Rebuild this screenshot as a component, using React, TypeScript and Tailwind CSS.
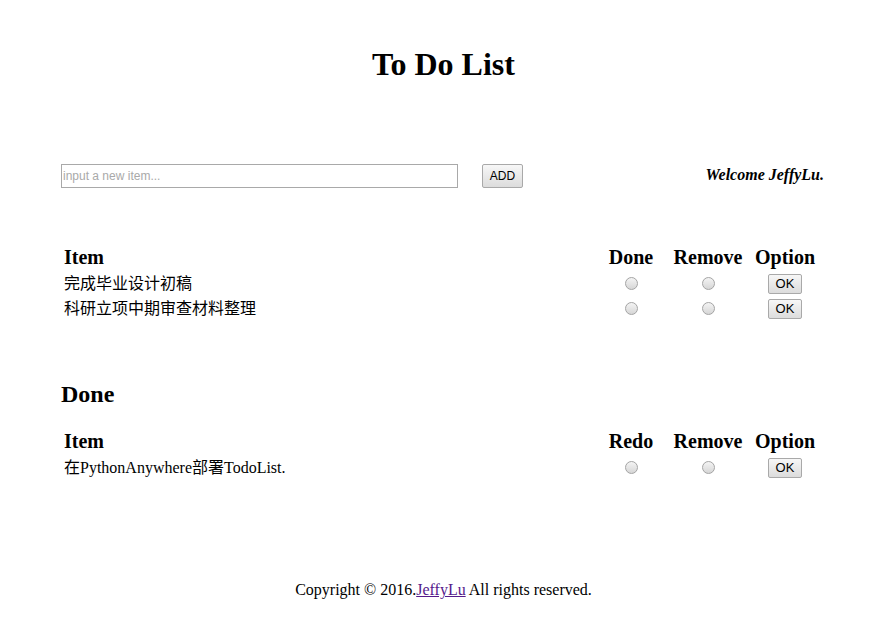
const serif = "font-['Liberation_Serif','Noto_Sans_CJK_SC',serif]";

const Radio = () => (
  <span className="inline-block w-[13px] h-[13px] rounded-full border border-[#a4a4a4] bg-gradient-to-b from-[#f4f4f4] to-[#d6d6d6]" />
);

const OkButton = () => (
  <button className="w-[34px] h-[20px] rounded-[2px] border border-[#a9a9a9] bg-gradient-to-b from-[#f7f7f7] to-[#dcdcdc] font-['Liberation_Sans',sans-serif] text-[13px] leading-none text-black">
    OK
  </button>
);

type Row = { text: string };

const TaskTable = ({ col1, rows }: { col1: string; rows: Row[] }) => (
  <div className="ml-[61px] w-[759px]">
    <div className="grid grid-cols-[535px_70px_84px_70px] h-[27px] pb-[2px] items-center text-[20px] font-bold leading-none">
      <div className="pl-[3px]">Item</div>
      <div className="text-center">{col1}</div>
      <div className="text-center">Remove</div>
      <div className="text-center">Option</div>
    </div>
    {rows.map((r) => (
      <div key={r.text} className="grid grid-cols-[535px_70px_84px_70px] h-[25px] items-center text-[16px]">
        <div className="pl-[3px]">{r.text}</div>
        <div className="flex justify-center"><Radio /></div>
        <div className="flex justify-center"><Radio /></div>
        <div className="flex justify-center"><OkButton /></div>
      </div>
    ))}
  </div>
);

export default function App() {
  return (
    <div className={`${serif} w-[887px] h-[618px] bg-white text-black`}>
      <h1 className="pt-[46px] text-center text-[32px] font-bold leading-[37px]">To Do List</h1>

      <div className="mt-[81px] ml-[61px] w-[763px] flex items-center">
        <input
          placeholder="input a new item..."
          className="w-[397px] h-[24px] border border-[#a9a9a9] px-[1px] font-['Liberation_Sans',sans-serif] text-[12px] placeholder:text-[#a9a9a9] outline-none"
        />
        <button className="ml-[24px] w-[41px] h-[24px] rounded-[2px] border border-[#a9a9a9] bg-gradient-to-b from-[#f7f7f7] to-[#dcdcdc] font-['Liberation_Sans',sans-serif] text-[12px] leading-none">
          ADD
        </button>
        <div className="ml-auto -mt-[3px] text-[16px] font-bold italic">Welcome JeffyLu.</div>
      </div>

      <div className="mt-[56px]">
        <TaskTable
          col1="Done"
          rows={[{ text: "完成毕业设计初稿" }, { text: "科研立项中期审查材料整理" }]}
        />
      </div>

      <h2 className="mt-[59px] ml-[61px] text-[24px] font-bold leading-[28px]">Done</h2>

      <div className="mt-[20px]">
        <TaskTable col1="Redo" rows={[{ text: "在PythonAnywhere部署TodoList." }]} />
      </div>

      <footer className="mt-[101px] text-center text-[16px] leading-[18px]">
        Copyright © 2016.<a href="#" className="text-[#551a8b] underline">JeffyLu</a> All rights reserved.
      </footer>
    </div>
  );
}
